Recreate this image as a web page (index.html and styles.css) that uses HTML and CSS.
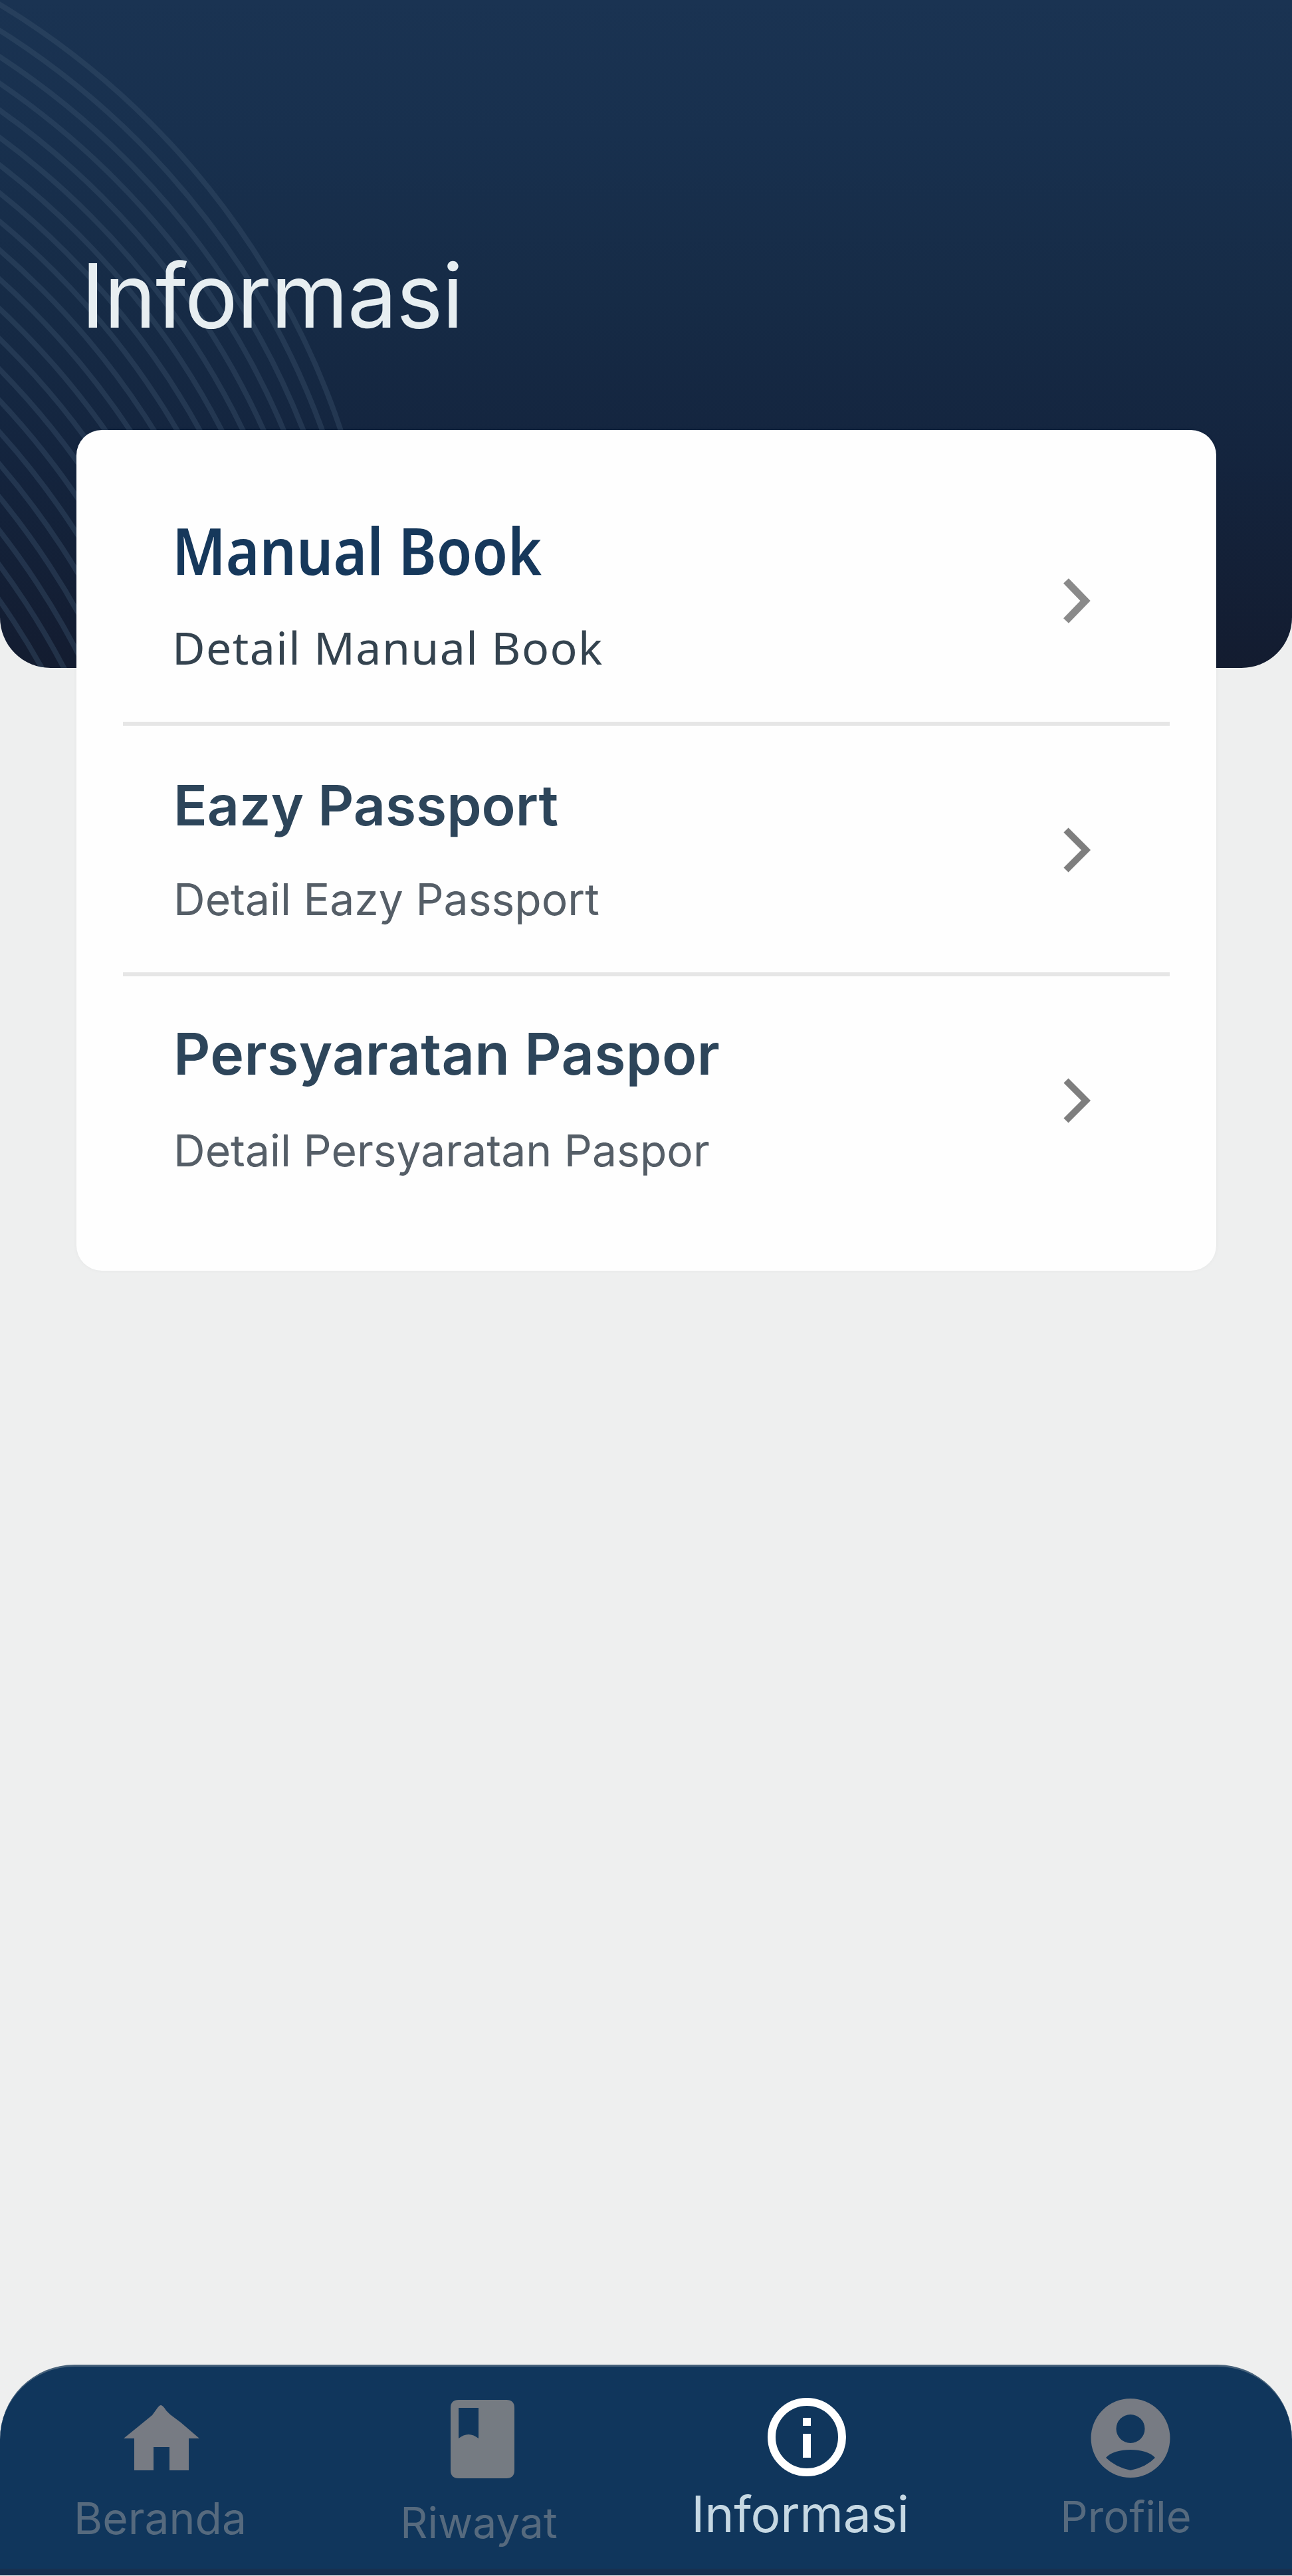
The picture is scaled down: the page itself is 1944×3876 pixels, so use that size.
FILE: index.html
```html
<!DOCTYPE html>
<html lang="id">
<head>
<meta charset="utf-8">
<title>Informasi</title>
<link rel="stylesheet" href="styles.css">
</head>
<body>
<div class="screen">
  <header class="hero">
    <svg class="arcs" viewBox="0 0 600 1005" aria-hidden="true">
      <g fill="none" stroke="#3c556f" stroke-opacity=".38" stroke-width="8">
        <circle cx="-619" cy="1028" r="1194"/><circle cx="-637" cy="1056" r="1194"/>
        <circle cx="-655" cy="1084" r="1194"/><circle cx="-673" cy="1112" r="1194"/>
        <circle cx="-691" cy="1140" r="1194"/><circle cx="-709" cy="1168" r="1194"/>
        <circle cx="-727" cy="1196" r="1194"/><circle cx="-745" cy="1224" r="1194"/>
        <circle cx="-763" cy="1252" r="1194"/><circle cx="-781" cy="1280" r="1194"/>
        <circle cx="-799" cy="1308" r="1194"/><circle cx="-817" cy="1336" r="1194"/>
        <circle cx="-835" cy="1364" r="1194"/><circle cx="-853" cy="1392" r="1194"/>
        <circle cx="-871" cy="1420" r="1194"/><circle cx="-889" cy="1448" r="1194"/>
        <circle cx="-907" cy="1476" r="1194"/><circle cx="-925" cy="1504" r="1194"/>
        <circle cx="-943" cy="1532" r="1194"/><circle cx="-961" cy="1560" r="1194"/>
        <circle cx="-979" cy="1588" r="1194"/><circle cx="-997" cy="1616" r="1194"/>
      </g>
    </svg>
    <h1 class="title">Informasi</h1>
  </header>

  <main class="card">
    <a class="row row-manual">
      <div class="copy"><h2 class="name">Manual Book</h2><p class="detail">Detail Manual Book</p></div>
      <svg class="chevron" viewBox="0 0 42 68"><path d="M5 4 34 34 5 64" fill="none" stroke="#8a8a8a" stroke-width="11"/></svg>
    </a>
    <a class="row row-eazy">
      <div class="copy"><h2 class="name">Eazy Passport</h2><p class="detail">Detail Eazy Passport</p></div>
      <svg class="chevron" viewBox="0 0 42 68"><path d="M5 4 35 34 5 64" fill="none" stroke="#7e7e7e" stroke-width="10"/></svg>
    </a>
    <a class="row row-syarat">
      <div class="copy"><h2 class="name">Persyaratan Paspor</h2><p class="detail">Detail Persyaratan Paspor</p></div>
      <svg class="chevron" viewBox="0 0 42 68"><path d="M5 4 35 34 5 64" fill="none" stroke="#7e7e7e" stroke-width="10"/></svg>
    </a>
  </main>

  <nav class="tabs">
    <a class="tab beranda">
      <svg class="icon" viewBox="0 0 120 122"><path fill="#777b83" d="M59 11Q62 11 67 19L73 25 89 37 117 61H101V109H72V74H48V109H19V61H3L24 44 46 26 54 15Q57 11 59 11Z"/></svg>
      <span class="label">Beranda</span>
    </a>
    <a class="tab riwayat">
      <svg class="icon" viewBox="0 0 120 122"><path fill="#757b82" fill-rule="evenodd" d="M24 3H96Q108 3 108 15V109Q108 121 96 121H24Q12 121 12 109V15Q12 3 24 3ZM24 15V61Q39 49 54 61V15Z"/></svg>
      <span class="label">Riwayat</span>
    </a>
    <a class="tab informasi">
      <svg class="icon" viewBox="0 0 120 122"><circle cx="59" cy="59" r="53" fill="none" stroke="#fff" stroke-width="12"/><path fill="#fff" d="M53 30H65V42H53ZM53 54H65V90H53Z"/></svg>
      <span class="label">Informasi</span>
    </a>
    <a class="tab profile">
      <svg class="icon" viewBox="0 0 120 122"><path fill="#777b83" fill-rule="evenodd" d="M60 1A59.500 59.500 0 1 1 60 120 59.500 59.500 0 1 1 60 1ZM60 25A21.500 21.500 0 1 0 60 68 21.500 21.500 0 1 0 60 25ZM23 90Q37 104 60 109 84 104 97 90C84 74 36 74 23 90Z"/></svg>
      <span class="label">Profile</span>
    </a>
  </nav>
</div>
</body>
</html>
```
FILE: styles.css
```css
* { box-sizing: border-box; margin: 0; padding: 0; }

body { background: #eeefef; font-family: Inter, sans-serif; }

.screen { width: 1944px; height: 3876px; display: flex; flex-direction: column; overflow: hidden; }

.hero {
  position: relative;
  flex: none;
  height: 1005px;
  padding: 365px 0 0 122px;
  overflow: hidden;
  border-radius: 0 0 76px 76px;
  background: linear-gradient(#1a3352 0, #18304e 20%, #162b46 45%, #14253f 66%, #131c30 100%);
}

.arcs { position: absolute; top: 0; left: 0; width: 600px; height: 1005px; }

.title { position: relative; color: #e7eef1; font-size: 133px; font-weight: 400; line-height: 160px; letter-spacing: -1.2px; white-space: nowrap; }

.card {
  position: relative;
  flex: none;
  width: 1715px;
  height: 1265px;
  margin: -358px 0 0 115px;
  padding: 0 70px;
  border-radius: 38px;
  background: #fefefe;
  box-shadow: 0 0 6px rgba(0, 0, 0, .04);
}

.row { display: flex; justify-content: space-between; padding: 0 119px 0 76px; height: 377px; border-bottom: 6px solid #e6e6e6; }
.row-manual { height: 445px; }
.row-syarat { border-bottom: 0; }

.name { color: #2d455a; font-size: 84px; font-weight: 600; line-height: 100px; white-space: nowrap; }
.detail { color: #555e67; font-size: 66px; font-weight: 400; line-height: 80px; white-space: nowrap; }

.chevron { flex: none; width: 42px; height: 68px; }
.row-manual .chevron { margin-top: 223px; }
.row-eazy .chevron { margin-top: 153px; }
.row-syarat .chevron { margin-top: 153px; }

.row-manual { padding-left: 74px; }
.row-manual .copy { padding-top: 130px; font-family: "Noto Sans", sans-serif; }
.row-manual .name { color: #16385b; font-size: 97px; line-height: 100px; transform: scaleX(.896); transform-origin: 0 0; }
.row-manual .detail { margin-top: 57px; color: #34434f; font-size: 68px; letter-spacing: 1.4px; }

.row-eazy .copy { padding-top: 70px; }
.row-eazy .detail { margin-top: 51px; }

.row-syarat .copy { padding-top: 67px; }
.row-syarat .name { font-size: 86px; letter-spacing: .4px; }
.row-syarat .detail { margin-top: 55px; }

.tabs {
  flex: none;
  display: grid;
  grid-template-columns: 486px 486px 486px 486px;
  height: 317px;
  margin: auto 0 1px;
  padding-top: 47px;
  border-top: 3px solid #46617a;
  border-bottom: 10px solid #17304f;
  border-radius: 112px 112px 0 0;
  background: #10365c;
}

.tab { display: flex; flex-direction: column; align-items: center; }
.icon { flex: none; width: 120px; height: 122px; }
.label { color: #566a7e; font-size: 66px; line-height: 80px; white-space: nowrap; }
.beranda .label { margin: 19px 4px 0 0; }
.riwayat .icon { margin-right: 6px; }
.riwayat .label { margin: 26px 17px 0 0; font-size: 64px; }
.informasi .label { margin: 13px 22px 0 0; color: #c6d8e3; font-size: 75px; letter-spacing: -.3px; }
.profile .label { margin: 17px 14px 0 0; font-size: 65px; }
```
